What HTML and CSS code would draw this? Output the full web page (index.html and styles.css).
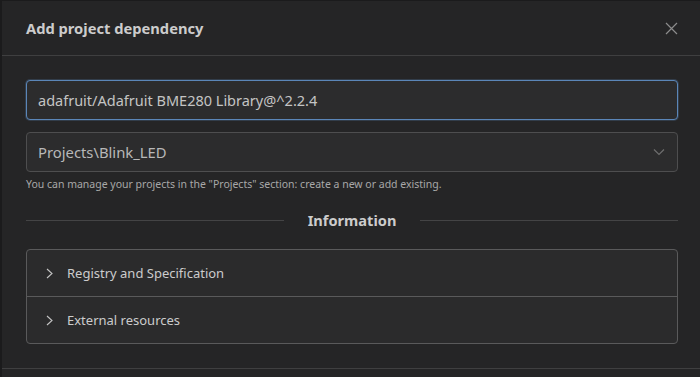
FILE: index.html
```html
<!DOCTYPE html>
<html lang="en">
<head>
  <meta charset="UTF-8">
  <meta name="viewport" content="width=device-width, initial-scale=1.0">
  <title>Add project dependency</title>
  <link rel="stylesheet" href="styles.css">
</head>
<body>
  <div class="backdrop">
    <div class="dialog">
      <header class="dialogHeader">
        <h1 class="dialogTitle">Add project dependency</h1>
        <button class="closeBtn" aria-label="Close">
          <svg width="13" height="13" viewBox="0 0 13 13"><path d="M1 1L12 12M12 1L1 12" stroke="#8c8c8c" stroke-width="1.2" fill="none"/></svg>
        </button>
      </header>

      <main class="dialogBody">
        <div class="field inputField">
          <input class="textInput" type="text" value="adafruit/Adafruit BME280 Library@^2.2.4">
        </div>

        <div class="field selectField">
          <span class="selectValue">Projects\Blink_LED</span>
          <svg class="selectChevron" width="12" height="8" viewBox="0 0 12 8"><path d="M1 1.5L6 6.5L11 1.5" stroke="#6e6e6e" stroke-width="1.2" fill="none"/></svg>
        </div>
        <p class="hint">You can manage your projects in the "Projects" section: create a new or add existing.</p>

        <div class="sectionDivider">
          <span class="dividerLine"></span>
          <span class="dividerTitle">Information</span>
          <span class="dividerLine"></span>
        </div>

        <div class="accordion">
          <div class="accordionItem">
            <svg class="itemChevron" width="7" height="11" viewBox="0 0 7 11"><path d="M1 1L6 5.5L1 10" stroke="#c4c4c4" stroke-width="1.1" fill="none"/></svg>
            <span>Registry and Specification</span>
          </div>
          <div class="accordionItem">
            <svg class="itemChevron" width="7" height="11" viewBox="0 0 7 11"><path d="M1 1L6 5.5L1 10" stroke="#c4c4c4" stroke-width="1.1" fill="none"/></svg>
            <span>External resources</span>
          </div>
        </div>
      </main>

      <footer class="dialogFooter"></footer>
    </div>
  </div>
</body>
</html>
```

FILE: styles.css
```css
html, body {
  margin: 0;
  padding: 0;
  height: 100%;
  font-family: 'Noto Sans', 'Open Sans', sans-serif;
  background-color: #1b1b1c;
  color: #c8c8c8;
  overflow: hidden;
}

.backdrop {
  height: 100%;
  padding: 1px 0 0 2px;
  box-sizing: border-box;
}

.dialog {
  height: 100%;
  background-color: #252526;
  display: flex;
  flex-direction: column;
}

.dialogHeader {
  height: 54px;
  border-bottom: 1px solid #3f3f40;
  display: flex;
  align-items: center;
  justify-content: space-between;
  padding: 0 22px 0 24px;
}

.dialogTitle {
  margin: 0;
  font-size: 14.7px;
  font-weight: 700;
  color: #cccccc;
}

.closeBtn {
  background: none;
  border: none;
  padding: 0;
  display: flex;
}

.dialogBody {
  padding: 24px 22px 0 24px;
  flex: 1;
}

.field {
  box-sizing: border-box;
  border-radius: 4px;
  background-color: #2c2c2d;
  display: flex;
  align-items: center;
}

.inputField {
  height: 40px;
  border: 1px solid #5b86b8;
  box-shadow: 0 0 0 1px rgba(91, 134, 184, 0.25);
}

.textInput {
  flex: 1;
  background: transparent;
  border: none;
  outline: none;
  font-family: inherit;
  font-size: 14.5px;
  color: #c4c4c4;
  padding: 0 11px;
}

.selectField {
  margin-top: 12px;
  height: 40px;
  border: 1px solid #4e4e4f;
  padding: 0 11px;
  justify-content: space-between;
}

.selectValue {
  font-size: 14.8px;
  color: #b8b8b8;
}

.selectChevron {
  margin-right: 1px;
}

.hint {
  margin: 5px 0 0;
  font-size: 10.5px;
  color: #a8a8a8;
}

.sectionDivider {
  margin-top: 19px;
  display: flex;
  align-items: center;
  gap: 24px;
}

.dividerLine {
  flex: 1;
  height: 1px;
  background-color: #444445;
}

.dividerTitle {
  font-size: 14.6px;
  font-weight: 700;
  color: #cccccc;
}

.accordion {
  margin-top: 19px;
  border: 1px solid #5a5a5b;
  border-radius: 4px;
  background-color: #2b2b2c;
}

.accordionItem {
  height: 46px;
  display: flex;
  align-items: center;
  padding-left: 19px;
  gap: 14px;
  font-size: 13px;
  color: #cccccc;
}

.accordionItem + .accordionItem {
  border-top: 1px solid #5a5a5b;
}

.dialogFooter {
  height: 8px;
  border-top: 1px solid #3f3f40;
}
```
